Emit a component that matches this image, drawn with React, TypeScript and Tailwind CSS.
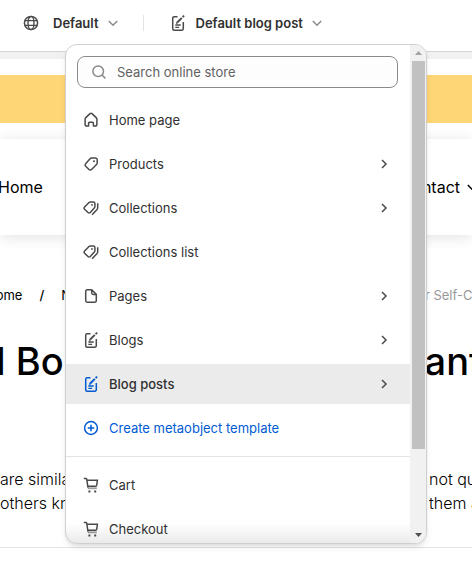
import type { ReactNode } from 'react'

function Icon({ children, className = '' }: { children: ReactNode; className?: string }) {
  return (
    <svg
      viewBox="0 0 16 16"
      fill="none"
      stroke="currentColor"
      strokeWidth="1.5"
      aria-hidden="true"
      className={`size-4 shrink-0 ${className}`}
    >
      {children}
    </svg>
  )
}

const GlobeIcon = () => (
  <Icon className="text-[#4a4a4a]">
    <circle cx="8" cy="8" r="6.6" />
    <ellipse cx="8" cy="8" rx="3" ry="6.6" strokeWidth="1.4" />
    <path d="M1.8 5.6h12.4M1.8 10.4h12.4" strokeWidth="1.4" />
  </Icon>
)

const NoteIcon = () => (
  <Icon>
    <path d="M7.5 1.8H4.2a1.5 1.5 0 0 0-1.5 1.5v10.4a1.5 1.5 0 0 0 1.5 1.5h7.6a1.5 1.5 0 0 0 1.5-1.5V7" />
    <path d="M5.3 10h5.4M5.3 12.4h3.8" strokeWidth="1.3" />
    <path d="m7.2 7.5 4.6-4.6" strokeWidth="1.9" />
    <path d="m12.6 2.2 1.5-1.5" strokeWidth="1.9" />
    <path d="m5.9 8.9.5-2.2 1.7 1.6z" fill="currentColor" stroke="none" />
  </Icon>
)

const HomeIcon = () => (
  <Icon>
    <path
      d="M2.1 7.3c0-.7.2-1.2.7-1.7l4.2-4a1.4 1.4 0 0 1 2 0l4.2 4c.5.5.7 1 .7 1.7v5a1.8 1.8 0 0 1-1.8 1.8h-1.7v-2.9a.9.9 0 0 0-.9-.9h-3a.9.9 0 0 0-.9.9v2.9H3.9a1.8 1.8 0 0 1-1.8-1.8z"
      strokeLinejoin="round"
    />
  </Icon>
)

const TagIcon = () => (
  <Icon>
    <path d="M8.5 2h3.9a1.8 1.8 0 0 1 1.8 1.8v3.1c0 .7-.3 1.2-.7 1.7l-4.9 4.9a1.8 1.8 0 0 1-2.6 0l-3.3-3.2a1.8 1.8 0 0 1 0-2.6l4.3-4.9c.4-.5.9-.8 1.5-.8z" />
    <circle cx="11" cy="5.2" r="1" fill="currentColor" stroke="none" />
  </Icon>
)

const TagsIcon = () => (
  <Icon>
    <path d="M7.4 2h2.9a1.6 1.6 0 0 1 1.6 1.6v2.8c0 .6-.2 1-.6 1.5l-4 4.6a1.6 1.6 0 0 1-2.3 0L1.6 9.3a1.6 1.6 0 0 1 0-2.2L6 2.6c.4-.4.9-.6 1.4-.6z" />
    <circle cx="9" cy="4.9" r=".9" fill="currentColor" stroke="none" />
    <path d="M14.7 3.2v4.6c0 .6-.2 1.1-.6 1.6l-5 5.3" strokeWidth="1.5" />
  </Icon>
)

const PageIcon = () => (
  <Icon>
    <path d="M8.7 1.8H4.3a1.6 1.6 0 0 0-1.6 1.6v9.2a1.6 1.6 0 0 0 1.6 1.6h7.4a1.6 1.6 0 0 0 1.6-1.6V6.4zM8.7 1.8v3a1.6 1.6 0 0 0 1.6 1.6h3" strokeLinejoin="round" />
  </Icon>
)

const PlusCircleIcon = () => (
  <Icon>
    <circle cx="8" cy="8" r="6.4" />
    <path d="M8 4.7v6.6M4.7 8h6.6" />
  </Icon>
)

const CartIcon = () => (
  <Icon>
    <path d="M.8 1.4h2c.5 0 .8.3.9.8L5 10.6" />
    <path d="M4 3.2h10.4l-.7 5.2c-.1.5-.4.8-.9.8H4.6" />
    <path d="M4.8 10.4h9v1.8h-9z" fill="currentColor" fillOpacity=".55" stroke="none" />
    <path d="M5.4 13.6h2v2h-2zM11.2 13.6h2v2h-2z" fill="currentColor" stroke="none" />
  </Icon>
)

const SearchIcon = () => (
  <Icon className="text-[#8a8a8a]">
    <circle cx="7.2" cy="7.2" r="5.3" />
    <path d="m11 11 3.4 3.4" />
  </Icon>
)

function ChevronDown({ className = '' }: { className?: string }) {
  return (
    <Icon className={className}>
      <path d="m3.8 6 4.2 4.2L12.2 6" />
    </Icon>
  )
}

type Item = { label: string; icon: ReactNode; more?: boolean; active?: boolean; link?: boolean }

const templates: Item[] = [
  { label: 'Home page', icon: <HomeIcon /> },
  { label: 'Products', icon: <TagIcon />, more: true },
  { label: 'Collections', icon: <TagsIcon />, more: true },
  { label: 'Collections list', icon: <TagsIcon /> },
  { label: 'Pages', icon: <PageIcon />, more: true },
  { label: 'Blogs', icon: <NoteIcon />, more: true },
  { label: 'Blog posts', icon: <NoteIcon />, more: true, active: true },
  { label: 'Create metaobject template', icon: <PlusCircleIcon />, link: true },
]

const others: Item[] = [
  { label: 'Cart', icon: <CartIcon /> },
  { label: 'Checkout', icon: <CartIcon /> },
]

function MenuItem({ item }: { item: Item }) {
  const iconColor = item.active || item.link ? 'text-[#005bd3]' : 'text-[#4a4a4a]'
  const textColor = item.link ? 'text-[#005bd3]' : 'text-[#303030]'
  return (
    <li>
      <button
        type="button"
        className={`flex h-10 w-full items-center gap-2.5 px-[17px] text-left text-[13px] leading-5 ${item.active ? 'bg-[#ebebeb] font-medium' : 'font-normal'}`}
      >
        <span className={iconColor}>{item.icon}</span>
        <span className={`flex-1 ${textColor}`}>{item.label}</span>
        {item.more && (
          <Icon className="mr-px text-[#4a4a4a]">
            <path d="m6 4 4 4-4 4" />
          </Icon>
        )}
      </button>
    </li>
  )
}

function TemplateMenu() {
  return (
    <div className="absolute top-11 right-[45px] left-[65px] z-10 flex h-[500px] overflow-hidden rounded-xl border border-[#d0d0d0] bg-white font-normal shadow-md">
      <div className="relative flex-1 overflow-hidden">
        <div className="px-[11px] pt-[11px] pr-3">
          <label className="flex h-8 items-center gap-2.5 rounded-lg border border-[#8a8a8a] bg-[#fdfdfd] px-[13px]">
            <SearchIcon />
            <input
              type="text"
              aria-label="Search online store"
              placeholder="Search online store"
              className="min-w-0 flex-1 bg-transparent text-[13px] leading-5 outline-none placeholder:text-[#616161]"
            />
          </label>
        </div>
        <ul className="mt-3 flex flex-col gap-1">
          {templates.map((item) => (
            <MenuItem key={item.label} item={item} />
          ))}
        </ul>
        <ul className="mt-2 flex flex-col gap-1 border-t border-[#e3e3e3] pt-2">
          {others.map((item) => (
            <MenuItem key={item.label} item={item} />
          ))}
        </ul>
        <div className="pointer-events-none absolute inset-x-0 bottom-0 h-5 bg-linear-to-t from-black/8 to-transparent" />
      </div>
      <div className="flex w-4 flex-col items-center bg-[#f1f1f1]">
        <svg viewBox="0 0 16 16" className="size-4 shrink-0 fill-[#a3a3a3]" aria-hidden="true">
          <path d="m5 10 3.5-4 3.5 4z" />
        </svg>
        <div className="ml-px h-[388px] w-[13px] bg-[#c1c1c1]" />
        <svg viewBox="0 0 16 16" className="mt-auto size-4 shrink-0 fill-[#505050]" aria-hidden="true">
          <path d="m5 6 3.5 4L12 6z" />
        </svg>
      </div>
    </div>
  )
}

function TopBar() {
  return (
    <header className="relative flex h-[52px] items-center border-b border-[#d4d4d4] bg-white pb-[5px] pl-[23px] text-[13px] leading-5 font-semibold text-[#303030]">
      <button type="button" className="flex items-center">
        <GlobeIcon />
        <span className="ml-3.5">Default</span>
        <ChevronDown className="ml-1.5 text-[#8a8a8a]" />
      </button>
      <span className="ml-[22px] h-4 w-px bg-[#e3e3e3]" />
      <button type="button" className="ml-[26px] flex items-center">
        <span className="text-[#4a4a4a]"><NoteIcon /></span>
        <span className="ml-2.5">Default blog post</span>
        <ChevronDown className="ml-1.5 text-[#8a8a8a]" />
      </button>
      <TemplateMenu />
    </header>
  )
}

function Preview() {
  return (
    <main className="overflow-hidden bg-white text-black">
      <div className="h-[7px] bg-[#f1f1f1]" />
      <div className="mt-4 h-12 bg-[#ffd675]" />
      <nav className="mt-4 flex h-24 items-center justify-between bg-white text-base shadow-[0_2px_14px_rgba(0,0,0,0.12)]">
        <a href="#" className="-ml-0.5">Home</a>
        <a href="#" className="-mr-2 flex items-center gap-1">
          Contact
          <ChevronDown className="size-3" />
        </a>
      </nav>
      <div className="mt-[50px] flex h-5 items-center justify-between text-[13px] leading-5 whitespace-nowrap">
        <div className="-ml-3.5 flex gap-[17px]">
          <a href="#">Home</a>
          <span className="font-medium">/</span>
          <a href="#">News</a>
        </div>
        <span className="-mr-5 text-[#999]">for Self-Care</span>
      </div>
      <h1 className="mt-8 flex h-12 items-center justify-between text-[38px] font-medium whitespace-nowrap">
        <span className="-ml-1">l Bo</span>
        <span className="-mr-2.5">Want</span>
      </h1>
      <div className="mt-[82px] grid grid-cols-[1fr_43px] pb-8 text-base font-light whitespace-nowrap">
        <p className="overflow-hidden">are similar in</p>
        <p>not quite</p>
        <p className="overflow-hidden">others know</p>
        <p>them as</p>
      </div>
      <hr className="border-[#e3e3e3]" />
    </main>
  )
}

export default function App() {
  return (
    <div className="min-h-screen bg-white font-['Inter',sans-serif]">
      <TopBar />
      <Preview />
    </div>
  )
}
